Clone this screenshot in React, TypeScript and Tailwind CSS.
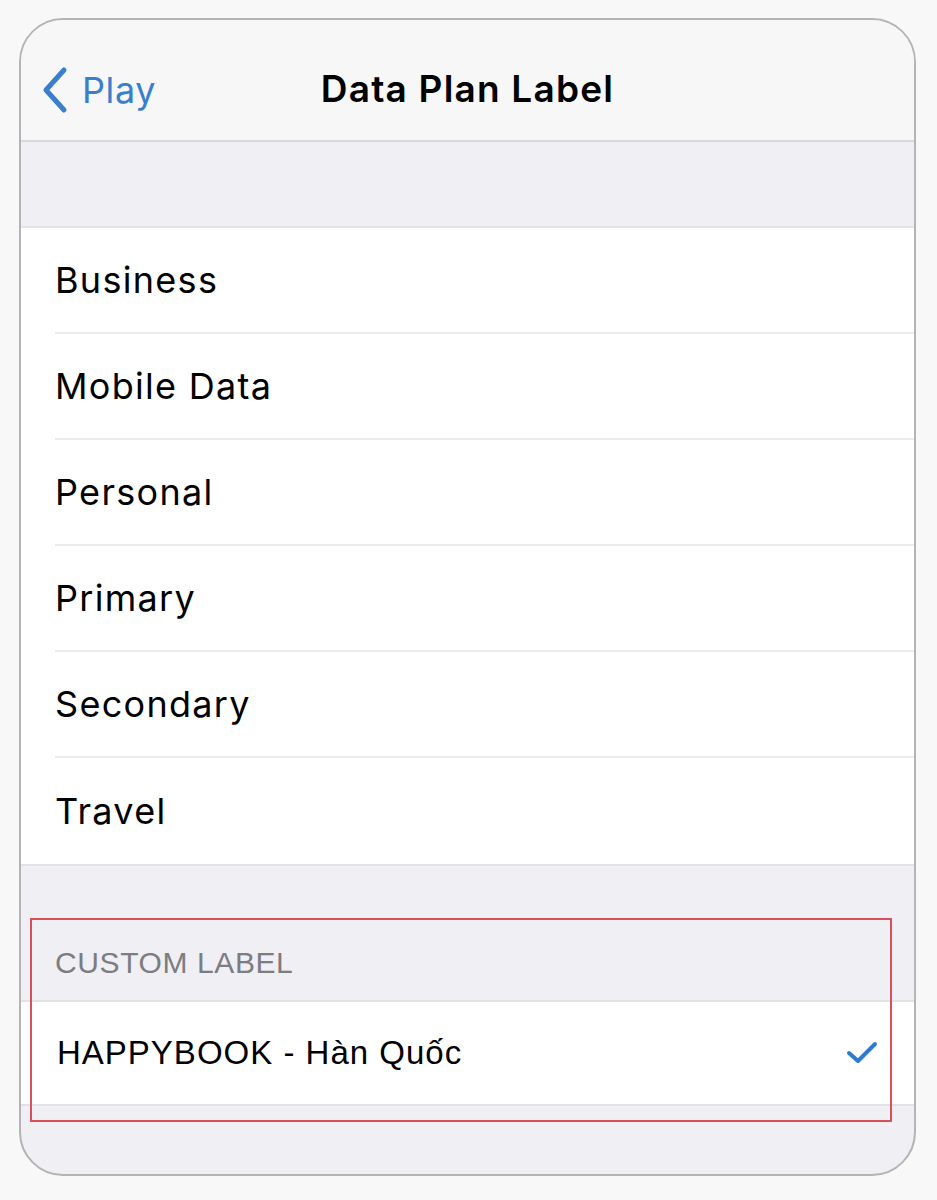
import React from 'react';

const labels = ['Business', 'Mobile Data', 'Personal', 'Primary', 'Secondary', 'Travel'];

const App = () => {
  return (
    <div className="min-h-[1200px] w-[937px] bg-[#f8f8f8] pt-[18px]">
      <div className="relative ml-[19px] flex h-[1158px] w-[897px] flex-col overflow-hidden rounded-[44px] border-2 border-[#b4b4b6] bg-[#efeff4]">
        {/* Nav bar */}
        <div className="relative flex h-[122px] items-center justify-center border-b-2 border-[#d9d9dd] bg-[#f7f7f8]">
          <div className="absolute left-[19px] top-[46px] flex items-center text-[#3a7fcb]">
            <svg width="32" height="48" viewBox="0 0 32 48" fill="none">
              <path d="M24 4 L6 24 L24 44" stroke="currentColor" strokeWidth="5" strokeLinecap="round" strokeLinejoin="round" />
            </svg>
            <span className="ml-[10px] font-['Inter',sans-serif] text-[36px] leading-none tracking-[0.6px]">Play</span>
          </div>
          <h1 className="mt-[18px] font-['Inter',sans-serif] text-[37px] font-semibold tracking-[1.2px] text-black">Data Plan Label</h1>
        </div>

        {/* spacer band */}
        <div className="h-[86px] border-b-2 border-[#e2e2e6]" />

        {/* list */}
        <div className="bg-white">
          {labels.map((label, i) => (
            <div key={label} className="pl-[34px]">
              <div
                className={`flex h-[106px] items-center font-['Inter',sans-serif] text-[36px] tracking-[1.3px] text-black ${
                  i < labels.length - 1 ? 'border-b-2 border-[#ececee]' : ''
                }`}
              >
                {label}
              </div>
            </div>
          ))}
        </div>

        {/* custom label section */}
        <div className="flex h-[136px] items-end border-t-2 border-[#e2e2e6] pb-[22px] pl-[34px]">
          <span className="font-['Liberation_Sans',sans-serif] text-[30px] leading-none tracking-[0.6px] text-[#7c7c81]">CUSTOM LABEL</span>
        </div>
        <div className="flex h-[106px] items-center justify-between border-y-2 border-[#e2e2e6] bg-white pl-[36px] pr-[36px]">
          <span className="font-['Liberation_Sans',sans-serif] text-[33px] tracking-[1px] text-black">HAPPYBOOK - Hàn Quốc</span>
          <svg width="32" height="26" viewBox="0 0 32 26" fill="none">
            <path d="M3 13 L12 21 L29 4" stroke="#2f7bd0" strokeWidth="4" strokeLinecap="round" strokeLinejoin="round" />
          </svg>
        </div>
        <div className="flex-1" />
      </div>

      {/* highlight box */}
      <div className="absolute left-[30px] top-[918px] h-[204px] w-[862px] border-2 border-[#d8505c]" />
    </div>
  );
};

export default App;
